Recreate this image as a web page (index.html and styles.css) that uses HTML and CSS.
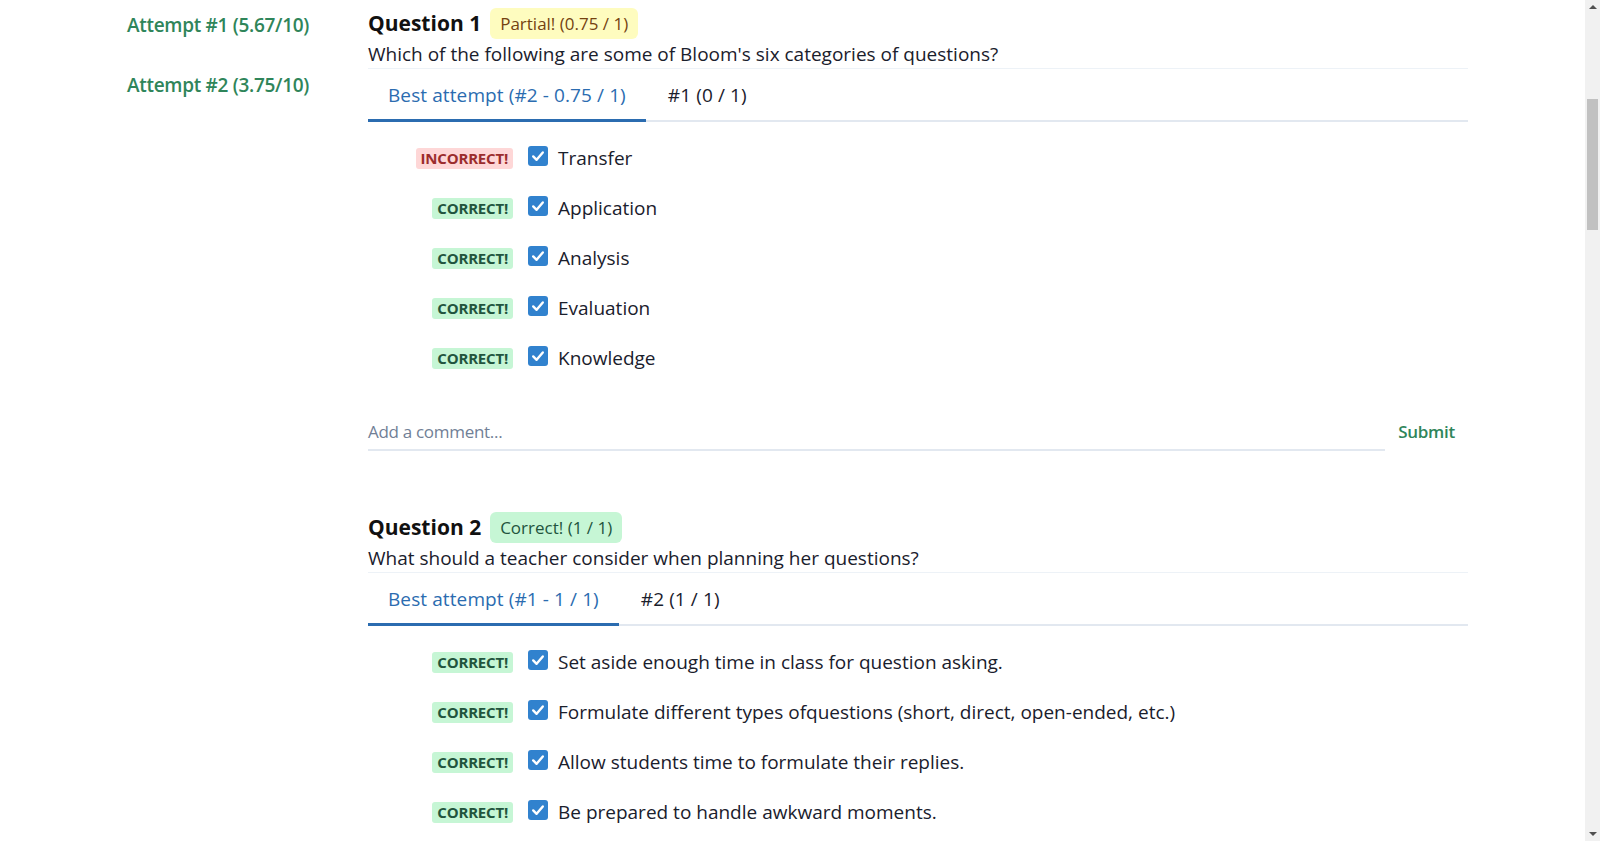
FILE: index.html
```html
<!DOCTYPE html>
<html lang="en">
<head>
<meta charset="utf-8">
<title>Quiz results</title>
<link rel="stylesheet" href="styles.css">
</head>
<body>
<div class="page">
  <aside class="sidebar">
    <a class="attempt">Attempt #1 (5.67/10)</a>
    <a class="attempt">Attempt #2 (3.75/10)</a>
  </aside>
  <main class="main">
    <section class="question">
      <div class="q-head">
        <h2 class="q-title">Question 1</h2>
        <span class="q-badge partial">Partial! (0.75 / 1)</span>
      </div>
      <p class="q-text">Which of the following are some of Bloom's six categories of questions?</p>
      <div class="tabs">
        <div class="tab active">Best attempt (#2 - 0.75 / 1)</div>
        <div class="tab">#1 (0 / 1)</div>
      </div>
      <ul class="answers">
        <li class="answer"><span class="mark"><span class="tag bad">INCORRECT!</span></span><span class="check"><svg viewBox="0 0 20 20" width="20" height="20"><path d="M5.2 10.4 L8.6 13.8 L14.8 6.4" fill="none" stroke="#fff" stroke-width="2.4" stroke-linecap="round" stroke-linejoin="round"/></svg></span><span class="label">Transfer</span></li>
        <li class="answer"><span class="mark"><span class="tag good">CORRECT!</span></span><span class="check"><svg viewBox="0 0 20 20" width="20" height="20"><path d="M5.2 10.4 L8.6 13.8 L14.8 6.4" fill="none" stroke="#fff" stroke-width="2.4" stroke-linecap="round" stroke-linejoin="round"/></svg></span><span class="label">Application</span></li>
        <li class="answer"><span class="mark"><span class="tag good">CORRECT!</span></span><span class="check"><svg viewBox="0 0 20 20" width="20" height="20"><path d="M5.2 10.4 L8.6 13.8 L14.8 6.4" fill="none" stroke="#fff" stroke-width="2.4" stroke-linecap="round" stroke-linejoin="round"/></svg></span><span class="label">Analysis</span></li>
        <li class="answer"><span class="mark"><span class="tag good">CORRECT!</span></span><span class="check"><svg viewBox="0 0 20 20" width="20" height="20"><path d="M5.2 10.4 L8.6 13.8 L14.8 6.4" fill="none" stroke="#fff" stroke-width="2.4" stroke-linecap="round" stroke-linejoin="round"/></svg></span><span class="label">Evaluation</span></li>
        <li class="answer"><span class="mark"><span class="tag good">CORRECT!</span></span><span class="check"><svg viewBox="0 0 20 20" width="20" height="20"><path d="M5.2 10.4 L8.6 13.8 L14.8 6.4" fill="none" stroke="#fff" stroke-width="2.4" stroke-linecap="round" stroke-linejoin="round"/></svg></span><span class="label">Knowledge</span></li>
      </ul>
      <div class="comment">
        <div class="comment-input">Add a comment...</div>
        <button class="submit">Submit</button>
      </div>
    </section>
    <section class="question">
      <div class="q-head">
        <h2 class="q-title">Question 2</h2>
        <span class="q-badge correct">Correct! (1 / 1)</span>
      </div>
      <p class="q-text">What should a teacher consider when planning her questions?</p>
      <div class="tabs">
        <div class="tab active">Best attempt (#1 - 1 / 1)</div>
        <div class="tab">#2 (1 / 1)</div>
      </div>
      <ul class="answers">
        <li class="answer"><span class="mark"><span class="tag good">CORRECT!</span></span><span class="check"><svg viewBox="0 0 20 20" width="20" height="20"><path d="M5.2 10.4 L8.6 13.8 L14.8 6.4" fill="none" stroke="#fff" stroke-width="2.4" stroke-linecap="round" stroke-linejoin="round"/></svg></span><span class="label">Set aside enough time in class for question asking.</span></li>
        <li class="answer"><span class="mark"><span class="tag good">CORRECT!</span></span><span class="check"><svg viewBox="0 0 20 20" width="20" height="20"><path d="M5.2 10.4 L8.6 13.8 L14.8 6.4" fill="none" stroke="#fff" stroke-width="2.4" stroke-linecap="round" stroke-linejoin="round"/></svg></span><span class="label">Formulate different types ofquestions (short, direct, open-ended, etc.)</span></li>
        <li class="answer"><span class="mark"><span class="tag good">CORRECT!</span></span><span class="check"><svg viewBox="0 0 20 20" width="20" height="20"><path d="M5.2 10.4 L8.6 13.8 L14.8 6.4" fill="none" stroke="#fff" stroke-width="2.4" stroke-linecap="round" stroke-linejoin="round"/></svg></span><span class="label">Allow students time to formulate their replies.</span></li>
        <li class="answer"><span class="mark"><span class="tag good">CORRECT!</span></span><span class="check"><svg viewBox="0 0 20 20" width="20" height="20"><path d="M5.2 10.4 L8.6 13.8 L14.8 6.4" fill="none" stroke="#fff" stroke-width="2.4" stroke-linecap="round" stroke-linejoin="round"/></svg></span><span class="label">Be prepared to handle awkward moments.</span></li>
      </ul>
    </section>
  </main>
</div>
<div class="scrollbar">
  <span class="arrow up"></span>
  <span class="thumb"></span>
  <span class="arrow down"></span>
</div>
</body>
</html>
```

FILE: styles.css
```css
html, body {
  margin: 0;
  padding: 0;
  height: 100%;
  overflow: hidden;
  background: #fff;
}
body {
  font-family: "Open Sans", "Noto Sans", sans-serif;
  color: #1a202c;
}
.page {
  display: flex;
  padding-left: 68px;
}
.sidebar {
  width: 300px;
  display: flex;
  flex-direction: column;
  align-items: center;
  padding-top: 11px;
  gap: 32px;
}
.attempt {
  font-size: 19px;
  font-weight: 600;
  color: #2f855a;
  line-height: 28px;
  letter-spacing: -0.3px;
}
.main {
  width: 1100px;
  padding-top: 8px;
}
.question {
  margin-bottom: 61px;
}
.q-head {
  display: flex;
  align-items: center;
  gap: 9px;
  height: 31px;
}
.q-title {
  margin: 0;
  margin-top: -2px;
  font-size: 21px;
  font-weight: 700;
  color: #111;
  letter-spacing: 0;
}
.q-badge {
  font-size: 17px;
  line-height: 31px;
  padding: 0 10px;
  border-radius: 6px;
  letter-spacing: 0;
}
.partial { background: #fefcbf; color: #744210; }
.correct { background: #c6f6d5; color: #22543d; }
.q-text {
  margin: 0;
  padding-top: 1px;
  font-size: 19px;
  line-height: 28px;
  border-bottom: 1px solid #edf2f7;
}
.tabs {
  display: flex;
  border-bottom: 2px solid #e2e8f0;
}
.tab {
  font-size: 19px;
  line-height: 28px;
  padding: 12px 20px 10px;
  margin-bottom: -2px;
  border-bottom: 3px solid transparent;
  color: #1a202c;
  letter-spacing: 0.1px;
}
.tab + .tab {
  padding-left: 22px;
}
.tab.active {
  color: #2b6cb0;
  border-bottom-color: #2b6cb0;
}
.answers {
  list-style: none;
  margin: 0;
  padding: 11px 0 0;
}
.answer {
  display: flex;
  align-items: center;
  height: 50px;
}
.mark {
  width: 145px;
  display: flex;
  justify-content: flex-end;
}
.tag {
  font-size: 15px;
  font-weight: 700;
  line-height: 21px;
  padding: 0 5px;
  border-radius: 3px;
  letter-spacing: -0.2px;
}
.tag.bad { background: #fed7d7; color: #9b2c2c; }
.tag.good { background: #c6f6d5; color: #22543d; }
.check {
  margin-left: 15px;
  width: 20px;
  height: 20px;
  border-radius: 3px;
  background: #3182ce;
  display: flex;
  margin-top: -4px;
}
.label {
  margin-left: 10px;
  font-size: 19px;
}
.comment {
  display: flex;
  align-items: flex-end;
  margin-top: 31px;
}
.comment-input {
  flex: 1;
  font-size: 17px;
  line-height: 24px;
  padding: 6px 0 5px;
  color: #718096;
  border-bottom: 2px solid #e2e8f0;
  letter-spacing: -0.3px;
}
.submit {
  background: none;
  border: 0;
  font-family: inherit;
  font-size: 17px;
  font-weight: 600;
  color: #2f855a;
  padding: 6px 13px 8px;
  margin-left: 0;
  width: 83px;
  letter-spacing: -0.3px;
}
.scrollbar {
  position: fixed;
  top: 0;
  right: 0;
  width: 15px;
  height: 100%;
  background: #f1f1f1;
  display: flex;
  flex-direction: column;
  align-items: center;
}
.arrow {
  width: 0;
  height: 0;
  border-left: 4px solid transparent;
  border-right: 4px solid transparent;
}
.arrow.up {
  border-bottom: 4px solid #505050;
  margin-top: 5px;
}
.arrow.down {
  border-top: 4px solid #505050;
  margin-top: auto;
  margin-bottom: 5px;
}
.thumb {
  width: 11px;
  height: 131px;
  background: #c1c1c1;
  margin-top: 90px;
}
```
